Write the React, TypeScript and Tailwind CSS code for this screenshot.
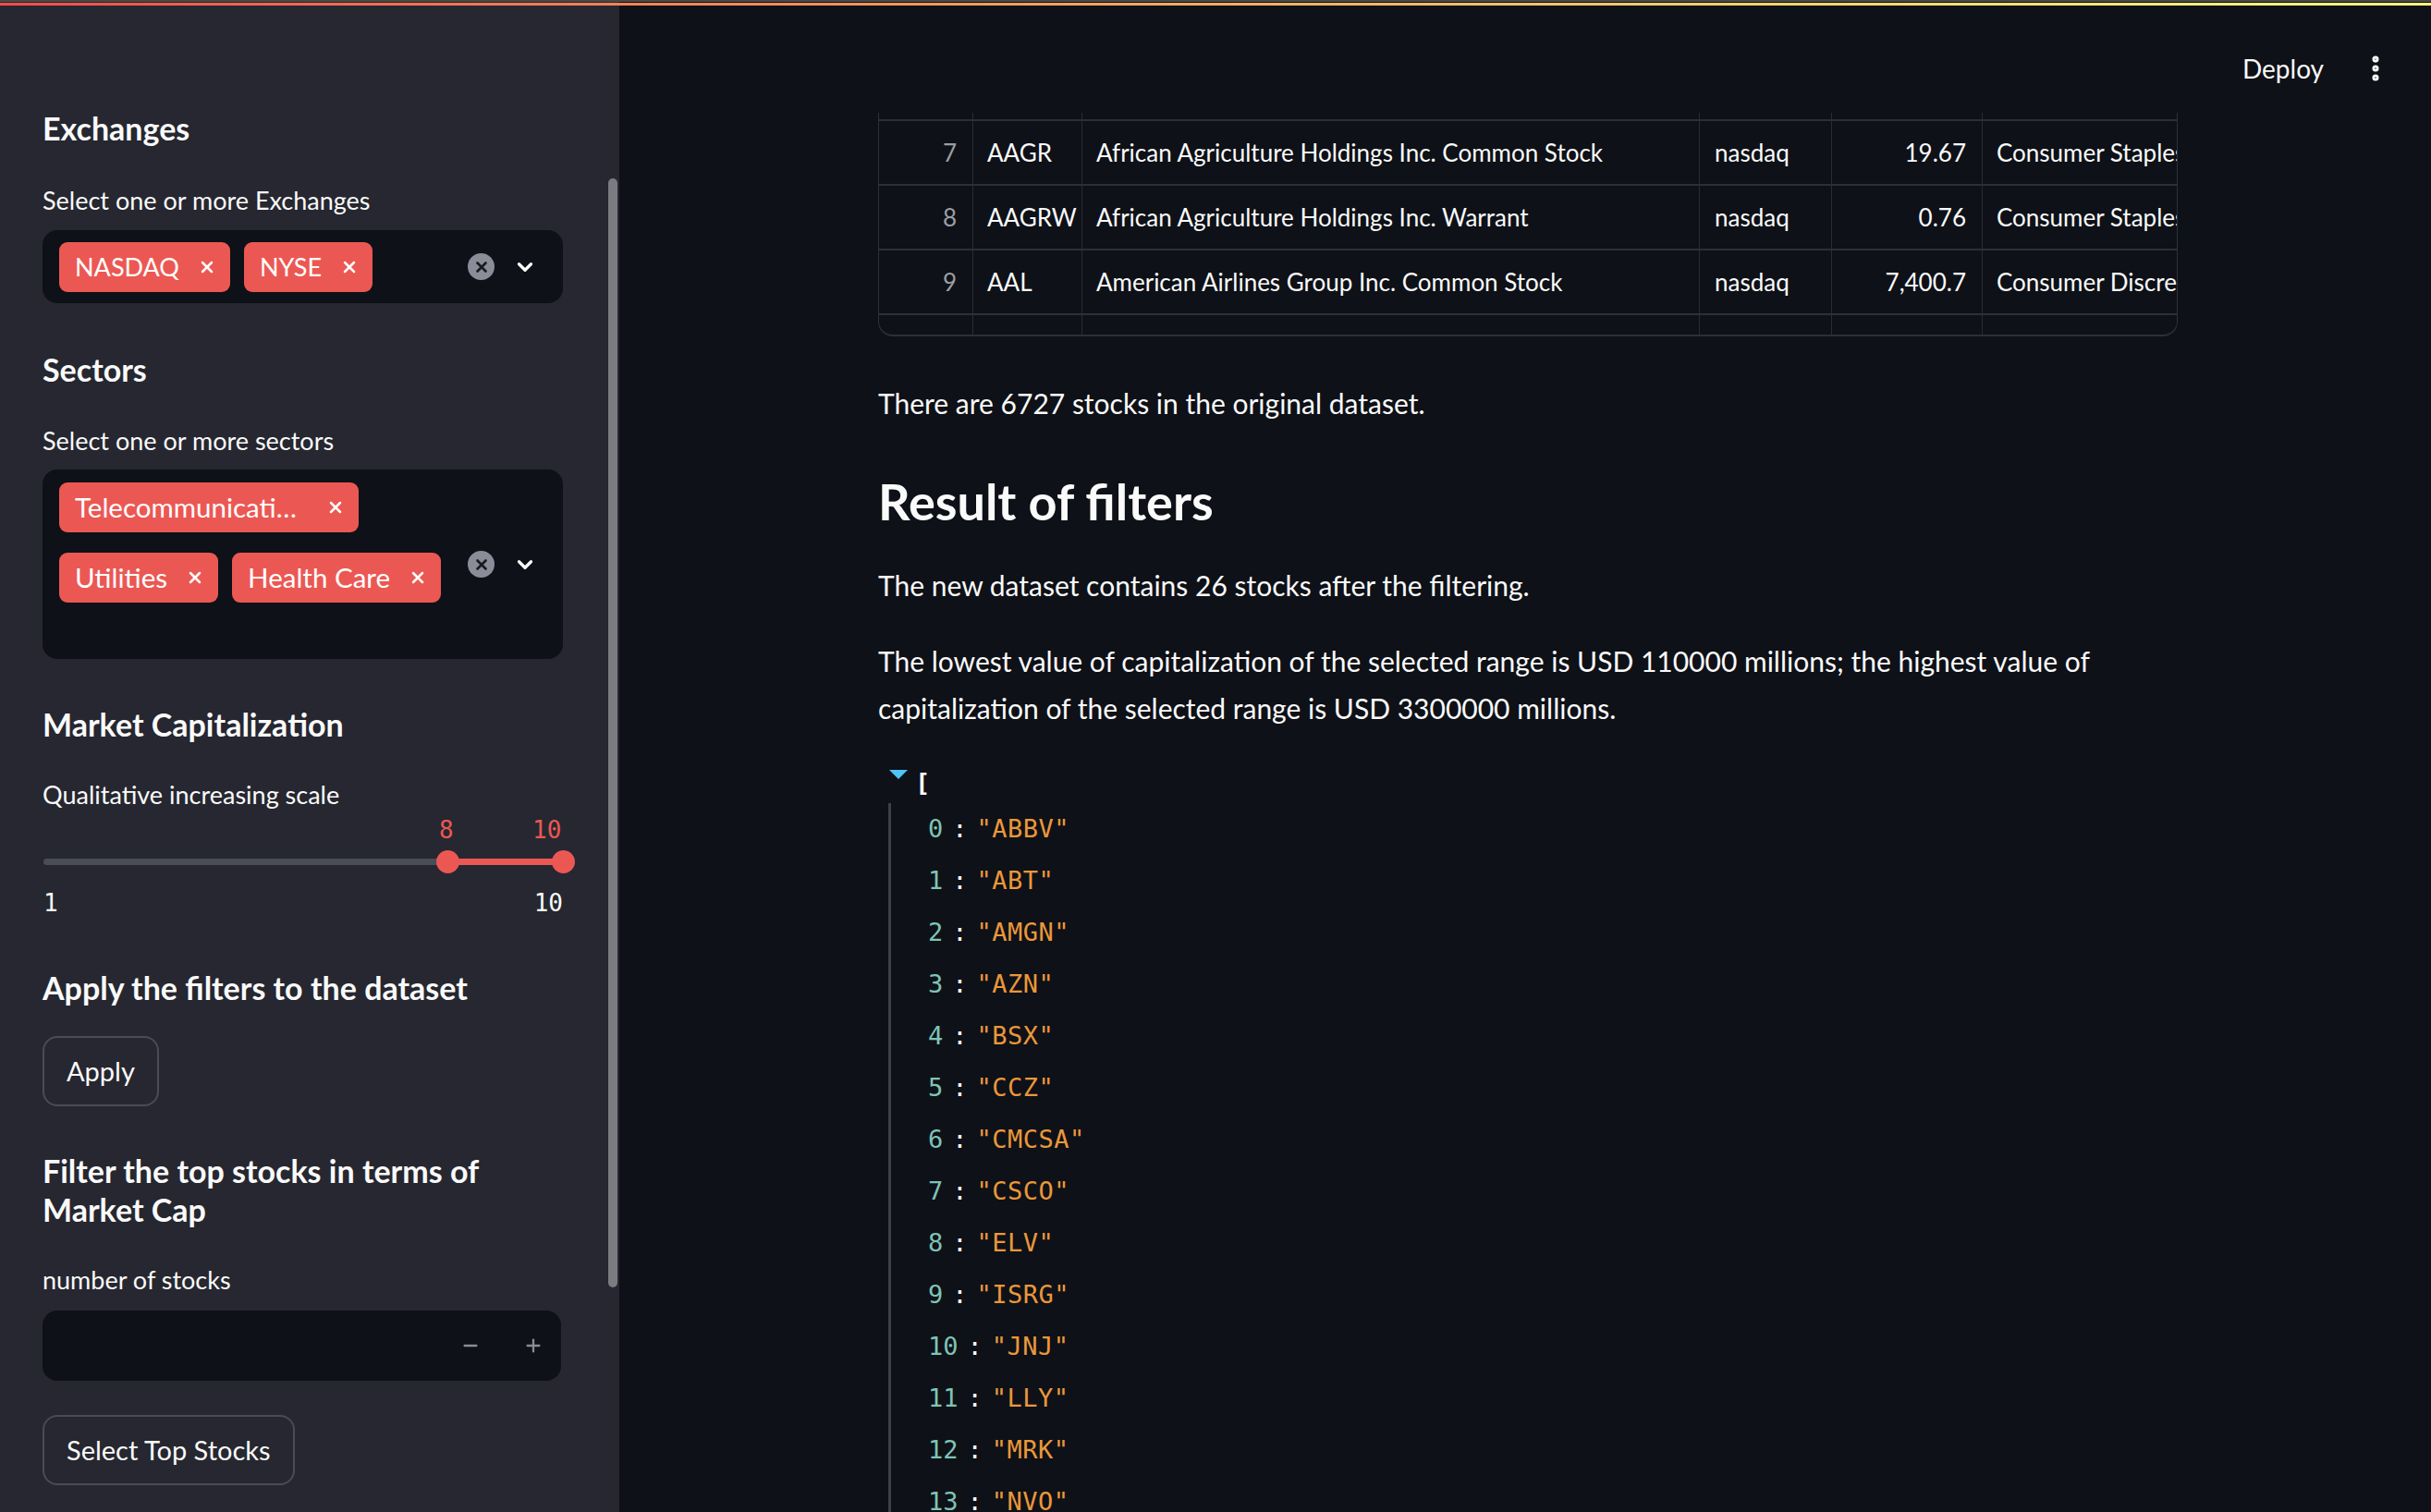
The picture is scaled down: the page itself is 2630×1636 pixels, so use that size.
import { ChevronDown, EllipsisVertical, Minus, Plus, X } from 'lucide-react';

const sans = "font-['Lato','Liberation_Sans',sans-serif]";
const mono = "font-['DejaVu_Sans_Mono',monospace]";

const tickers = [
  'ABBV', 'ABT', 'AMGN', 'AZN', 'BSX', 'CCZ', 'CMCSA',
  'CSCO', 'ELV', 'ISRG', 'JNJ', 'LLY', 'MRK', 'NVO', 'NVS',
];

const rows = [
  { idx: '7', sym: 'AAGR', name: 'African Agriculture Holdings Inc. Common Stock', ex: 'nasdaq', cap: '19.67', sector: 'Consumer Staples' },
  { idx: '8', sym: 'AAGRW', name: 'African Agriculture Holdings Inc. Warrant', ex: 'nasdaq', cap: '0.76', sector: 'Consumer Staples' },
  { idx: '9', sym: 'AAL', name: 'American Airlines Group Inc. Common Stock', ex: 'nasdaq', cap: '7,400.7', sector: 'Consumer Discretionary' },
  { idx: '10', sym: 'AAME', name: 'Atlantic American Corporation Common Stock', ex: 'nasdaq', cap: '31.03', sector: 'Finance' },
];

/** Red multiselect chip */
function Tag({ label, textClass = '' }: { label: string; textClass?: string }) {
  return (
    <span className="flex h-[54px] items-center gap-[20px] rounded-[9px] bg-[#eb5853] pl-[17px] pr-[15px] text-[29.5px] text-white">
      <span className={`leading-none ${textClass}`}>{label}</span>
      <X className="h-[20px] w-[20px] shrink-0" strokeWidth={3} />
    </span>
  );
}

function SelectControls() {
  return (
    <div className="ml-auto flex items-center gap-[20px] pr-[28px]">
      <span className="flex h-[29px] w-[29px] items-center justify-center rounded-full bg-[#8a8d97]">
        <X className="h-[18px] w-[18px] text-[#1a1b20]" strokeWidth={3.5} />
      </span>
      <ChevronDown className="h-[26px] w-[26px] text-white" strokeWidth={3} />
    </div>
  );
}

function SideHeading({ children, className = '' }: { children: React.ReactNode; className?: string }) {
  return <h3 className={`text-[34px] font-bold leading-[42px] text-[#fafafa] ${className}`}>{children}</h3>;
}

function Label({ children, className = '' }: { children: React.ReactNode; className?: string }) {
  return <p className={`text-[27px] leading-[40px] text-[#fafafa] ${className}`}>{children}</p>;
}

function OutlineButton({ children, className = '' }: { children: React.ReactNode; className?: string }) {
  return (
    <button className={`flex h-[76px] items-center rounded-[16px] border-2 border-[#4a4b53] px-[24px] text-[29px] text-[#fafafa] ${className}`}>
      {children}
    </button>
  );
}

function Sidebar() {
  return (
    <aside className={`relative h-full w-[670px] shrink-0 bg-[#262730] pl-[46px] pr-[61px] pt-[118px] ${sans}`}>
      <SideHeading>Exchanges</SideHeading>
      <Label className="mt-[37px]">Select one or more Exchanges</Label>
      <div className="mt-[12px] flex h-[79px] items-center gap-[15px] rounded-[16px] bg-[#0e1117] pl-[18px]">
        <Tag label="NASDAQ" textClass="text-[27px]" />
        <Tag label="NYSE" textClass="text-[27px]" />
        <SelectControls />
      </div>

      <SideHeading className="mt-[51px]">Sectors</SideHeading>
      <Label className="mt-[36px]">Select one or more sectors</Label>
      <div className="mt-[11px] flex h-[205px] items-center rounded-[16px] bg-[#0e1117] pl-[18px]">
        <div className="flex flex-col gap-[22px] self-start pt-[14px]">
          <div className="flex">
            <Tag label="Telecommunications" textClass="block w-[252px] overflow-hidden text-ellipsis whitespace-nowrap py-[4px]" />
          </div>
          <div className="flex gap-[15px]">
            <Tag label="Utilities" />
            <Tag label="Health Care" />
          </div>
        </div>
        <SelectControls />
      </div>

      <SideHeading className="mt-[50px]">Market Capitalization</SideHeading>
      <Label className="mt-[35px]">Qualitative increasing scale</Label>
      <div className={`relative -mt-[3px] h-[114px] ${mono}`}>
        <span className="absolute left-[429px] top-[6px] text-[26px] leading-[30px] text-[#eb5853]">8</span>
        <span className="absolute left-[530px] top-[6px] text-[26px] leading-[30px] text-[#eb5853]">10</span>
        <div className="absolute left-[1px] right-0 top-[52px] h-[7px] rounded-full bg-[#4a4c56]" />
        <div className="absolute left-[438px] right-0 top-[52px] h-[7px] bg-[#eb5853]" />
        <div className="absolute left-[426px] top-[43px] h-[25px] w-[25px] rounded-full bg-[#eb5853]" />
        <div className="absolute right-[-13px] top-[43px] h-[25px] w-[25px] rounded-full bg-[#eb5853]" />
        <span className="absolute left-[1px] top-[85px] text-[26px] leading-[30px] text-[#fafafa]">1</span>
        <span className="absolute right-0 top-[85px] text-[26px] leading-[30px] text-[#fafafa]">10</span>
      </div>

      <SideHeading className="mt-[57px]">Apply the filters to the dataset</SideHeading>
      <OutlineButton className="mt-[31px]">Apply</OutlineButton>

      <SideHeading className="mt-[49px]">
        Filter the top stocks in terms of
        <br />
        Market Cap
      </SideHeading>
      <Label className="mt-[35px]">number of stocks</Label>
      <div className="mt-[13px] flex h-[76px] w-[561px] items-center justify-end gap-[46px] rounded-[16px] bg-[#0e1117] pr-[19px] text-[#8b8d96]">
        <Minus className="h-[22px] w-[22px]" strokeWidth={2.5} />
        <Plus className="h-[22px] w-[22px]" strokeWidth={2.5} />
      </div>
      <OutlineButton className="mt-[37px]">Select Top Stocks</OutlineButton>

      {/* scrollbar thumb */}
      <div className="absolute right-[2px] top-[193px] h-[1200px] w-[10px] rounded-full bg-[#7b7c82]" />
    </aside>
  );
}

function DataTable() {
  const cols = ['w-[102px]', 'w-[118px]', 'w-[668px]', 'w-[143px]', 'w-[163px]', 'flex-1'];
  const cell = 'h-full shrink-0 border-r border-[#2a2c33] overflow-hidden whitespace-nowrap';
  return (
    <div className={`h-[242px] w-[1406px] overflow-hidden rounded-b-[16px] border-x border-b-2 border-[#2e3037] text-[26px] text-[#fafafa] ${sans}`}>
      <div className="flex h-[7px]">
        {cols.map((c, i) => (
          <div key={i} className={`${c} ${cell} ${i === 5 ? 'border-r-0' : ''}`} />
        ))}
      </div>
      {rows.map((r) => (
        <div key={r.idx} className="flex h-[70px] items-center border-t-2 border-[#2e3037]">
          <div className={`${cols[0]} ${cell} flex items-center justify-end pr-[17px] text-[#9b9da4]`}>{r.idx}</div>
          <div className={`${cols[1]} ${cell} flex items-center pl-[15px]`}>{r.sym}</div>
          <div className={`${cols[2]} ${cell} flex items-center pl-[15px]`}>{r.name}</div>
          <div className={`${cols[3]} ${cell} flex items-center pl-[16px]`}>{r.ex}</div>
          <div className={`${cols[4]} ${cell} flex items-center justify-end pr-[17px]`}>{r.cap}</div>
          <div className={`${cols[5]} h-full overflow-hidden whitespace-nowrap flex items-center pl-[15px]`}>{r.sector}</div>
        </div>
      ))}
    </div>
  );
}

function JsonView() {
  return (
    <div className={`mt-[43px] ${mono} text-[27px]`}>
      <div className="flex h-[28px] items-center">
        <svg width="20" height="11" viewBox="0 0 20 11" className="ml-[12px] -mt-[22px]">
          <path d="M0 0 L20 0 L10 10 Z" fill="#4fc3f7" />
        </svg>
        <span className="ml-[8px] -mt-[4px] font-bold text-[#fafafa]">[</span>
      </div>
      <div className="ml-[11px] mt-[6px] border-l-[3px] border-[#3f4045] pl-[40px]">
        {tickers.map((t, i) => (
          <div key={t} className="flex h-[56px] items-center">
            <span className="text-[#7fc4b6]">{i}</span>
            <span className="mx-[10px] text-[#fafafa]">:</span>
            <span className="tracking-[0.5px] text-[#eb973b]">"{t}"</span>
          </div>
        ))}
      </div>
    </div>
  );
}

export default function App() {
  return (
    <div className="relative flex h-screen w-full overflow-hidden bg-[#0e1117]">
      <div className="absolute left-0 right-0 top-0 z-20 h-[2px] bg-[#4a4a44]" />
      <div className="absolute left-0 right-0 top-[3px] z-20 h-[3px] bg-gradient-to-r from-[#ff4b4b] to-[#fffd80]" />

      <Sidebar />

      <main className={`relative flex-1 ${sans} text-[#fafafa]`}>
        <header className="absolute right-0 top-0 z-10 flex h-[148px] items-center gap-[39px] pr-[43px]">
          <span className="text-[28px] leading-none">Deploy</span>
          <EllipsisVertical className="h-[34px] w-[34px]" strokeWidth={3} />
        </header>

        <div className="ml-[280px] pt-[122px]">
          <DataTable />
          <p className="mt-[47px] text-[30px] leading-[50px]">There are 6727 stocks in the original dataset.</p>
          <h3 className="mt-[47px] text-[54px] font-bold leading-[70px]">Result of filters</h3>
          <p className="mt-[30px] text-[30px] leading-[50px]">The new dataset contains 26 stocks after the filtering.</p>
          <p className="mt-[32px] w-[1406px] text-[30px] leading-[51px]">
            The lowest value of capitalization of the selected range is USD 110000 millions; the highest value of
            capitalization of the selected range is USD 3300000 millions.
          </p>
          <JsonView />
        </div>
      </main>
    </div>
  );
}
